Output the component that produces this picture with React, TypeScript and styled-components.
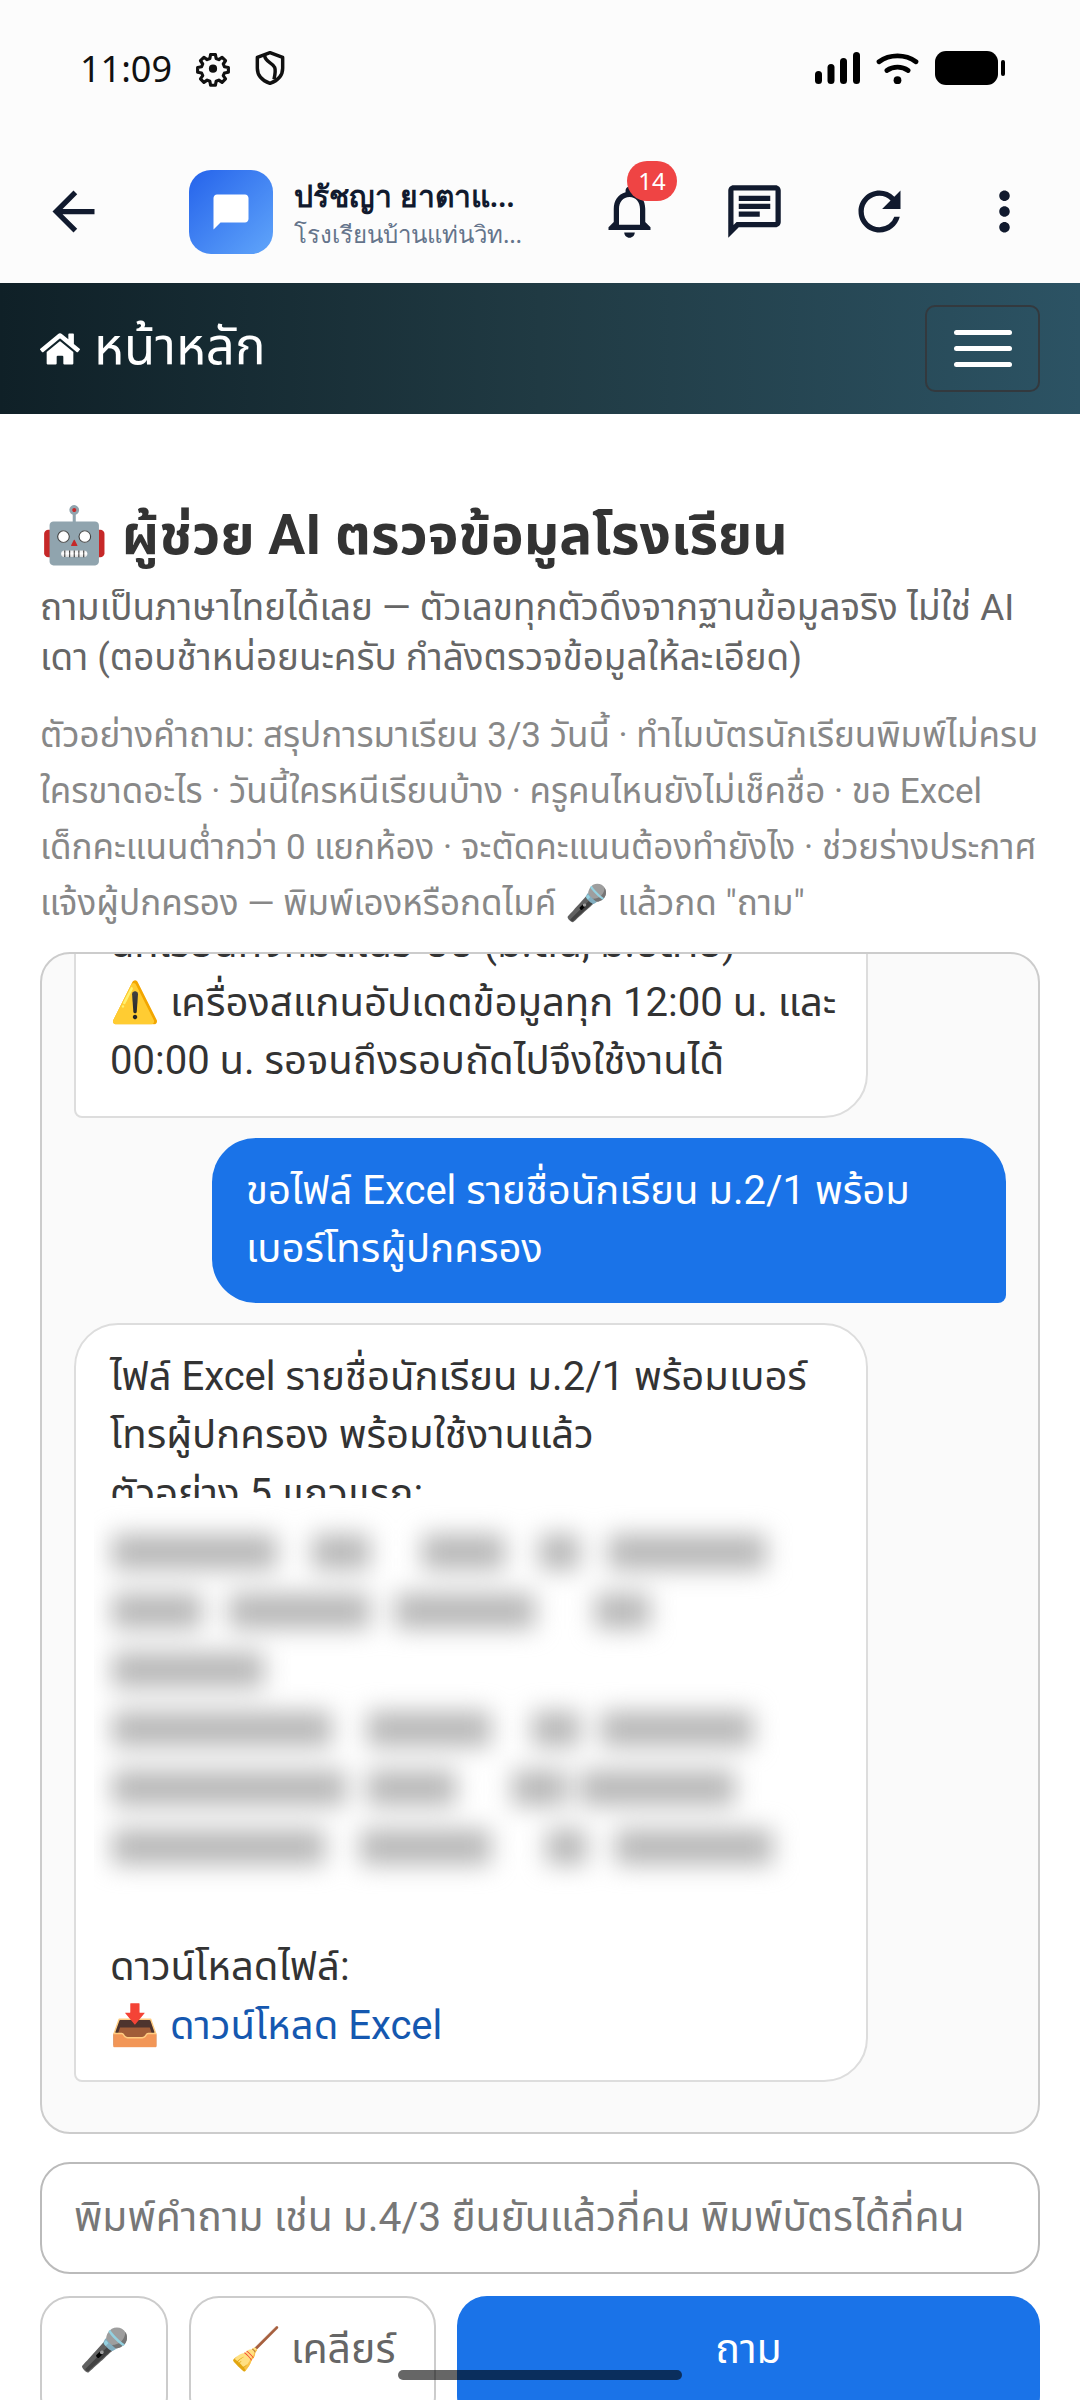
import React from 'react';
import styled, { createGlobalStyle } from 'styled-components';
import { FaHome } from 'react-icons/fa';
import { MdArrowBack, MdChatBubble, MdMoreVert, MdOutlineChat, MdOutlineNotifications, MdRefresh } from 'react-icons/md';

const GlobalStyle = createGlobalStyle`
    * { box-sizing: border-box; }
    html, body { margin: 0; padding: 0; background: #fff; }
    body { font-family: Roboto, "Noto Sans", "Noto Sans Thai", sans-serif; color: #333; }
`;

const Page = styled.div`
    position: relative;
    width: 1080px;
    height: 2400px;
    overflow: hidden;
    background: #fff;
`;

const StatusBar = styled.div`
    height: 140px;
    padding: 0 75px 4px 80px;
    display: flex;
    align-items: center;
    justify-content: space-between;
    background: #fcfcfc;
`;

const StatusLeft = styled.div`
    display: flex;
    align-items: center;
    gap: 22px;
`;

const StatusRight = styled.div`
    display: flex;
    align-items: center;
    gap: 16px;
`;

const Clock = styled.span`
    font-family: 'Noto Sans', sans-serif;
    font-size: 36px;
    color: #111;
`;

const AppBar = styled.div`
    height: 143px;
    padding: 0 12px 0 42px;
    display: flex;
    align-items: center;
    background: #fcfcfc;
    color: #111a2e;
`;

const BackButton = styled.div`
    width: 147px;
    display: flex;
    font-size: 63px;
`;

const Avatar = styled.div`
    width: 84px;
    height: 84px;
    border-radius: 22px;
    background: linear-gradient(135deg, #2563eb, #60a5fa);
    display: flex;
    align-items: center;
    justify-content: center;
    color: #fff;
    font-size: 42px;
    flex-shrink: 0;
`;

const Titles = styled.div`
    width: 238px;
    margin-left: 21px;
    font-family: 'Noto Sans', sans-serif;
`;

const TitleName = styled.div`
    font-size: 30px;
    line-height: 44px;
    font-weight: 600;
    white-space: nowrap;
    overflow: hidden;
    text-overflow: ellipsis;
`;

const TitleSchool = styled.div`
    font-size: 24px;
    line-height: 32px;
    color: #64748b;
    white-space: nowrap;
    overflow: hidden;
    text-overflow: ellipsis;
`;

const AppActions = styled.div`
    margin-left: 35px;
    flex: 1;
    display: grid;
    grid-template-columns: repeat(4, 125px);
    justify-items: center;
    align-items: center;
    font-size: 63px;
`;

const ActionIcon = styled.div`
    position: relative;
    display: flex;
`;

const Badge = styled.span`
    position: absolute;
    top: -19px;
    left: 29px;
    width: 50px;
    height: 40px;
    border-radius: 20px;
    background: #ef4444;
    color: #fff;
    font-family: 'Noto Sans', sans-serif;
    font-size: 24px;
    line-height: 40px;
    text-align: center;
`;

const NavBar = styled.div`
    height: 131px;
    padding: 0 40px;
    display: flex;
    align-items: center;
    justify-content: space-between;
    background: linear-gradient(90deg, #0f2027, #203a43, #2c5364);
`;

const Brand = styled.div`
    display: flex;
    align-items: center;
    gap: 14px;
    color: #fff;
    font-size: 51px;

    svg {
        width: 40px;
        height: 40px;
    }
`;

const Toggler = styled.div`
    width: 115px;
    height: 87px;
    border: 2px solid #33393e;
    border-radius: 10px;
    display: flex;
    flex-direction: column;
    align-items: center;
    justify-content: center;
    gap: 11px;
`;

const TogglerBar = styled.span`
    width: 58px;
    height: 5px;
    border-radius: 3px;
    background: #fff;
`;

const Content = styled.main`
    padding: 86px 40px 0;
`;

const Heading = styled.h1`
    margin: 0;
    font-size: 55px;
    line-height: 70px;
    font-weight: 700;
    color: #333;
`;

const Lead = styled.p`
    margin: 13px 0 0;
    font-size: 36.800px;
    line-height: 50px;
    color: #666;
`;

const Hint = styled.p`
    margin: 25px 0 0;
    font-size: 35px;
    line-height: 56px;
    color: #888;
`;

const ChatBox = styled.section`
    margin-top: 20px;
    height: 1182px;
    padding: 0 32px 50px;
    display: flex;
    flex-direction: column;
    justify-content: flex-end;
    gap: 20px;
    overflow: hidden;
    background: #fafafa;
    border: 2px solid #ccc;
    border-radius: 30px;
`;

const Bubble = styled.div<{ $mine?: boolean }>`
    flex-shrink: 0;
    width: 794px;
    padding: ${(p) => (p.$mine ? '24px 34px' : '23px 22px 25px 34px')};
    font-size: 40px;
    line-height: 58.500px;
    border-radius: ${(p) => (p.$mine ? '44px 44px 8px 44px' : '44px 44px 44px 8px')};
    align-self: ${(p) => (p.$mine ? 'flex-end' : 'flex-start')};
    background: ${(p) => (p.$mine ? '#1a73e8' : '#fff')};
    color: ${(p) => (p.$mine ? '#fff' : '#333')};
    border: ${(p) => (p.$mine ? '0' : '2px solid #ddd')};
`;

const BlurBlock = styled.div`
    position: relative;
    height: 440px;
    margin: -25px 0 0 -16px;
    padding: 24px 0 0 16px;
    overflow: hidden;
    background: #fff;
`;

const BlurRows = styled.div`
    filter: blur(12px);
`;

const BlurRow = styled.div`
    height: 59px;
    display: flex;
    align-items: center;
`;

const BlurSegment = styled.span`
    display: block;
    height: 36px;
    background: #b8b8b8;
`;

const DownloadLink = styled.a`
    color: #1558b0;
    text-decoration: none;
`;

const InputBox = styled.div`
    margin-top: 28px;
    height: 112px;
    padding: 0 32px;
    display: flex;
    align-items: center;
    border: 2px solid #bbb;
    border-radius: 30px;
    font-size: 40.800px;
    color: #777;
    white-space: nowrap;
`;

const Actions = styled.div`
    margin-top: 22px;
    display: flex;
    gap: 21px;
`;

const ActionButton = styled.div<{ $primary?: boolean; $width?: number }>`
    height: 130px;
    padding-bottom: 22px;
    display: flex;
    align-items: center;
    justify-content: center;
    flex: ${(p) => (p.$primary ? '1' : `0 0 ${p.$width}px`)};
    border-radius: 30px;
    border: ${(p) => (p.$primary ? '0' : '2px solid #ccc')};
    background: ${(p) => (p.$primary ? '#1a73e8' : '#fff')};
    color: ${(p) => (p.$primary ? '#fff' : '#666')};
    font-size: 41px;
`;

const HomeIndicator = styled.div`
    position: absolute;
    left: 398px;
    top: 2370px;
    width: 284px;
    height: 10px;
    border-radius: 5px;
    background: rgba(0, 0, 0, 0.6);
`;

const GearIcon = () => (
    <svg width="38" height="38" viewBox="0 0 24 24" fill="none" stroke="#111" strokeWidth="2.200" strokeLinejoin="round">
        <path d="M10.300 2.500h3.400l.5 2.800 1.900.8 2.300-1.600 2.400 2.400-1.600 2.300.8 1.900 2.800.5v3.400l-2.800.5-.8 1.900 1.600 2.300-2.400 2.400-2.300-1.600-1.900.8-.5 2.800h-3.400l-.5-2.800-1.900-.8-2.300 1.600-2.400-2.400 1.600-2.300-.8-1.900-2.800-.5v-3.400l2.800-.5.8-1.900-1.600-2.300 2.400-2.400 2.300 1.600 1.900-.8z" transform="translate(1.200 1.200) scale(.9)" />
        <circle cx="12" cy="12.400" r="2.600" fill="#111" stroke="none" />
    </svg>
);

const ShieldIcon = () => (
    <svg width="32" height="36" viewBox="0 0 24 27" fill="none" stroke="#111" strokeWidth="2.600" strokeLinejoin="round">
        <path d="M12 2l9.500 3.600v8c0 5.600-4 9.400-9.500 11.400-5.500-2-9.500-5.800-9.500-11.400v-8z" />
        <path d="M8 4c0 5 6 5.500 7.500 9 .8 2 .4 5-.5 9" />
    </svg>
);

const SignalIcon = () => (
    <svg width="45" height="32" viewBox="0 0 45 32" fill="#000">
        <rect x="0" y="19" width="7" height="13" rx="3.500" />
        <rect x="12.500" y="12" width="7" height="20" rx="3.500" />
        <rect x="25" y="6" width="7" height="26" rx="3.500" />
        <rect x="38" y="0" width="7" height="32" rx="3.500" />
    </svg>
);

const WifiIcon = () => (
    <svg width="43" height="33" viewBox="0 0 44 34" fill="none" stroke="#000" strokeWidth="5" strokeLinecap="round">
        <path d="M3 10c11-8 27-8 38 0" />
        <path d="M11 19c6.500-4.500 15.500-4.500 22 0" />
        <circle cx="22" cy="29" r="4" fill="#000" stroke="none" />
    </svg>
);

const BatteryIcon = () => (
    <svg width="70" height="34" viewBox="0 0 70 34" fill="#000">
        <rect x="0" y="0" width="63" height="34" rx="11" />
        <rect x="66" y="9" width="4" height="16" rx="2" />
    </svg>
);

const blurRows: [number, number][][] = [
    [[2, 165], [35, 58], [52, 83], [34, 41], [28, 158]],
    [[2, 90], [27, 141], [25, 140], [60, 55]],
    [[2, 152]],
    [[2, 220], [35, 124], [41, 48], [21, 152]],
    [[2, 234], [21, 89], [56, 55], [13, 155]],
    [[2, 213], [35, 131], [55, 41], [28, 158]],
];

const App: React.FC = () => (
    <Page>
        <GlobalStyle />
        <StatusBar>
            <StatusLeft>
                <Clock>11:09</Clock>
                <GearIcon />
                <ShieldIcon />
            </StatusLeft>
            <StatusRight>
                <SignalIcon />
                <WifiIcon />
                <BatteryIcon />
            </StatusRight>
        </StatusBar>
        <AppBar>
            <BackButton>
                <MdArrowBack />
            </BackButton>
            <Avatar>
                <MdChatBubble />
            </Avatar>
            <Titles>
                <TitleName>ปรัชญา ยาตาแก้วคำมูล</TitleName>
                <TitleSchool>โรงเรียนบ้านแท่นวิทยาคม</TitleSchool>
            </Titles>
            <AppActions>
                <ActionIcon>
                    <MdOutlineNotifications />
                    <Badge>14</Badge>
                </ActionIcon>
                <ActionIcon>
                    <MdOutlineChat />
                </ActionIcon>
                <ActionIcon>
                    <MdRefresh />
                </ActionIcon>
                <ActionIcon>
                    <MdMoreVert />
                </ActionIcon>
            </AppActions>
        </AppBar>
        <NavBar>
            <Brand>
                <FaHome />
                หน้าหลัก
            </Brand>
            <Toggler>
                <TogglerBar />
                <TogglerBar />
                <TogglerBar />
            </Toggler>
        </NavBar>
        <Content>
            <Heading>🤖 ผู้ช่วย AI ตรวจข้อมูลโรงเรียน</Heading>
            <Lead>
                ถามเป็นภาษาไทยได้เลย — ตัวเลขทุกตัวดึงจากฐานข้อมูลจริง ไม่ใช่ AI เดา (ตอบช้าหน่อยนะครับ กำลังตรวจข้อมูลให้ละเอียด)
            </Lead>
            <Hint>
                ตัวอย่างคำถาม: สรุปการมาเรียน 3/3 วันนี้ · ทำไมบัตรนักเรียนพิมพ์ไม่ครบ ใครขาดอะไร · วันนี้ใครหนีเรียนบ้าง · ครูคนไหนยังไม่เช็คชื่อ · ขอ Excel เด็กคะแนนต่ำกว่า 0 แยกห้อง · จะตัดคะแนนต้องทำยังไง · ช่วยร่างประกาศแจ้งผู้ปกครอง — พิมพ์เองหรือกดไมค์ 🎤 แล้วกด "ถาม"
            </Hint>
            <ChatBox>
                <Bubble>
                    นักเรียนทั้งหมดในระบบ (ม.ต้น, ม.ปลาย)
                    <br />
                    ⚠️ เครื่องสแกนอัปเดตข้อมูลทุก 12:00 น. และ 00:00 น. รอจนถึงรอบถัดไปจึงใช้งานได้
                </Bubble>
                <Bubble $mine>ขอไฟล์ Excel รายชื่อนักเรียน ม.2/1 พร้อมเบอร์โทรผู้ปกครอง</Bubble>
                <Bubble>
                    ไฟล์ Excel รายชื่อนักเรียน ม.2/1 พร้อมเบอร์โทรผู้ปกครอง พร้อมใช้งานแล้ว
                    <br />
                    ตัวอย่าง 5 แถวแรก:
                    <BlurBlock>
                        <BlurRows>
                            {blurRows.map((row, i) => (
                                <BlurRow key={i}>
                                    {row.map(([gap, width], j) => (
                                        <BlurSegment key={j} style={{ marginLeft: gap, width }} />
                                    ))}
                                </BlurRow>
                            ))}
                        </BlurRows>
                    </BlurBlock>
                    ดาวน์โหลดไฟล์:
                    <br />
                    📥 <DownloadLink href="#">ดาวน์โหลด Excel</DownloadLink>
                </Bubble>
            </ChatBox>
            <InputBox>พิมพ์คำถาม เช่น ม.4/3 ยืนยันแล้วกี่คน พิมพ์บัตรได้กี่คน</InputBox>
            <Actions>
                <ActionButton $width={128}>🎤</ActionButton>
                <ActionButton $width={247}>🧹 เคลียร์</ActionButton>
                <ActionButton $primary>ถาม</ActionButton>
            </Actions>
        </Content>
        <HomeIndicator />
    </Page>
);

export default App;
